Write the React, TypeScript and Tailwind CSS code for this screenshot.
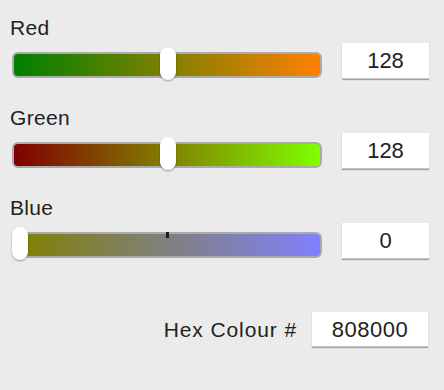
import React, { useState } from 'react';

type Channel = {
  name: string;
  value: number;
  from: string;
  to: string;
};

const Slider: React.FC<{ channel: Channel }> = ({ channel }) => {
  // thumb travels across the track minus its own width
  const left = (channel.value / 255) * (310 - 16);
  return (
    <div className="relative mt-[9px] h-[26px] w-[310px] shrink-0">
      <div
        className="h-full w-full rounded-[6px] border-2 border-[#ababab]"
        style={{ backgroundImage: `linear-gradient(to right, ${channel.from}, ${channel.to})` }}
      />
      <div className="absolute left-[154px] top-0 h-[6px] w-[3px] bg-[#1c1c1c]" />
      <div
        className="absolute top-[-5px] h-[33px] w-[16px] rounded-full bg-white shadow-[0_1px_2px_rgba(0,0,0,0.35)]"
        style={{ left }}
      />
    </div>
  );
};

const App: React.FC = () => {
  const [channels] = useState<Channel[]>([
    { name: 'Red', value: 128, from: 'rgb(0,128,0)', to: 'rgb(255,128,0)' },
    { name: 'Green', value: 128, from: 'rgb(128,0,0)', to: 'rgb(128,255,0)' },
    { name: 'Blue', value: 0, from: 'rgb(128,128,0)', to: 'rgb(128,128,255)' },
  ]);

  return (
    <div className="flex h-[390px] w-[444px] flex-col bg-[#ebebeb] pl-[12px] pt-[16px] font-['Liberation_Sans',Arial,sans-serif] text-[#222]">
      {channels.map((c) => (
        <div key={c.name} className="mb-[27px]">
          <div className="ml-[-2px] h-[24px] text-[21px] leading-[24px] tracking-[0.3px]">{c.name}</div>
          <div className="mt-[3px] flex items-start">
            <Slider channel={c} />
            <div className="ml-[20px] flex h-[36px] w-[87px] items-center justify-center bg-white text-[22px] shadow-[0_1px_1px_rgba(0,0,0,0.3)] border-b border-[#c4c4c4]">
              {c.value}
            </div>
          </div>
        </div>
      ))}
      <div className="mt-[26px] flex items-center justify-end pr-[16px]">
        <span className="mr-[15px] text-[21px] tracking-[0.9px]">Hex Colour #</span>
        <div className="flex h-[35px] w-[116px] items-center justify-center bg-white text-[22px] tracking-[0.5px] shadow-[0_1px_1px_rgba(0,0,0,0.3)] border-b border-[#c4c4c4]">
          808000
        </div>
      </div>
    </div>
  );
};

export default App;
